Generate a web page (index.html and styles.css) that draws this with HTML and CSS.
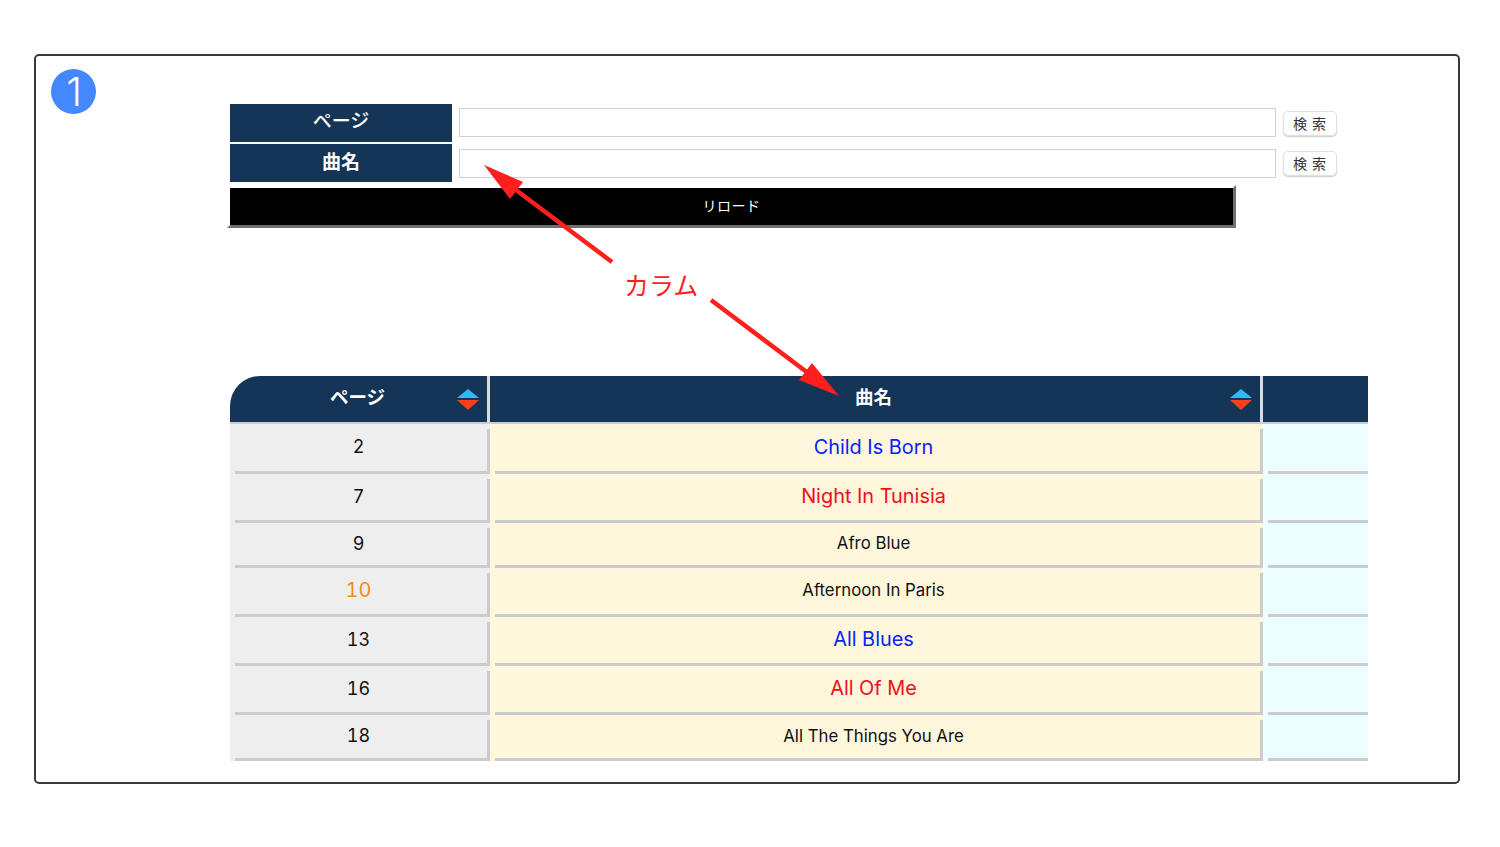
FILE: index.html

```html
<!DOCTYPE html>
<html lang="ja">
<head>
  <meta charset="UTF-8" />
  <meta name="viewport" content="width=device-width, initial-scale=1.0"/>
  <title>カラム</title>
  <link rel="stylesheet" href="styles.css">
</head>
<body>
  <div class="frame">
    <div class="badge">1</div>

    <div class="search">
      <div class="search-row">
        <div class="search-label">ページ</div>
        <input class="search-input" type="text" />
        <button class="search-btn">検 索</button>
      </div>
      <div class="search-row">
        <div class="search-label">曲名</div>
        <input class="search-input" type="text" />
        <button class="search-btn">検 索</button>
      </div>
      <button class="reload">リロード</button>
    </div>

    <table class="songs">
      <colgroup>
        <col class="col-page" />
        <col class="col-title" />
        <col class="col-extra" />
      </colgroup>
      <thead>
        <tr>
          <th class="first">ページ
            <svg class="sort" viewBox="0 0 22 21"><path d="M11 0 22 9H0z" fill="#2cbdf0"/><path d="M0 11h22L11 21z" fill="#f5411c"/></svg>
          </th>
          <th class="title-head">曲名
            <svg class="sort" viewBox="0 0 22 21"><path d="M11 0 22 9H0z" fill="#2cbdf0"/><path d="M0 11h22L11 21z" fill="#f5411c"/></svg>
          </th>
          <th class="last"></th>
        </tr>
      </thead>
      <tbody>
        <tr class="row-first">
          <td class="page">2</td>
          <td class="title blue">Child Is Born</td>
          <td class="extra"></td>
        </tr>
        <tr>
          <td class="page">7</td>
          <td class="title red">Night In Tunisia</td>
          <td class="extra"></td>
        </tr>
        <tr class="row-short">
          <td class="page">9</td>
          <td class="title">Afro Blue</td>
          <td class="extra"></td>
        </tr>
        <tr>
          <td class="page orange">10</td>
          <td class="title">Afternoon In Paris</td>
          <td class="extra"></td>
        </tr>
        <tr>
          <td class="page">13</td>
          <td class="title blue">All Blues</td>
          <td class="extra"></td>
        </tr>
        <tr>
          <td class="page">16</td>
          <td class="title red">All Of Me</td>
          <td class="extra"></td>
        </tr>
        <tr class="row-last">
          <td class="page">18</td>
          <td class="title">All The Things You Are</td>
          <td class="extra"></td>
        </tr>
      </tbody>
    </table>

    <!-- annotation, same coordinates as the screenshot -->
    <svg class="arrows" viewBox="34 54 1426 730">
      <path d="M612 262 516 190" stroke="#ff1f1f" stroke-width="4.5" fill="none"/>
      <path d="M484 165 523 182 510 199z" fill="#ff1f1f"/>
      <path d="M711 300 812 376" stroke="#ff1f1f" stroke-width="4.5" fill="none"/>
      <path d="M839 396 799 380 812 363z" fill="#ff1f1f"/>
    </svg>
    <div class="note">カラム</div>
  </div>
</body>
</html>
```

FILE: styles.css

```css
html, body {
  margin: 0;
  padding: 0;
  background-color: #fff;
  font-family: "Noto Sans CJK JP", "Noto Sans", sans-serif;
}

.frame {
  position: relative;
  box-sizing: border-box;
  width: 1426px;
  height: 730px;
  margin: 54px 0 0 34px;
  padding: 48px 0 0 194px;
  border: 2px solid #3a3a3a;
  border-radius: 5px;
}

.badge {
  position: absolute;
  left: 15px;
  top: 13px;
  width: 45px;
  height: 45px;
  padding-left: 1px;
  box-sizing: border-box;
  border-radius: 50%;
  background: #4488ff;
  color: #fff;
  font-family: Inter, sans-serif;
  font-weight: 300;
  font-size: 40px;
  line-height: 45px;
  text-align: center;
}

.search {
  display: flex;
  flex-direction: column;
  align-items: flex-start;
  gap: 2.5px;
}

.search-row {
  display: flex;
  align-items: center;
  gap: 7px;
  height: 37.5px;
}

.search-row + .search-row .search-input {
  margin-top: 1px;
}

.search-label {
  width: 222px;
  height: 100%;
  background: #153557;
  color: #fff;
  font-size: 19px;
  font-weight: 500;
  line-height: 32px;
  text-align: center;
}

.search-row + .search-row .search-label {
  font-weight: 700;
  line-height: 34px;
}

.search-input {
  box-sizing: border-box;
  width: 817px;
  height: 29px;
  padding: 0;
  border: 1px solid #d2d2d2;
  background: #fff;
}

.search-btn {
  box-sizing: border-box;
  width: 54px;
  height: 25px;
  margin-top: 2px;
  padding: 0 0 2px;
  border: 1px solid #e0e0e0;
  border-radius: 5px;
  background: #fff;
  box-shadow: 0 1px 1px #ccc;
  color: #333;
  font-family: inherit;
  font-size: 14px;
  letter-spacing: 1px;
}

.reload {
  box-sizing: border-box;
  width: 1009px;
  height: 43px;
  margin: 1px 0 0 -3px;
  padding: 0 0 4px;
  border: 3px solid;
  border-color: #fff #707070 #707070 #fff;
  background: #000;
  color: #fff;
  font-family: inherit;
  font-size: 14px;
  letter-spacing: .5px;
}

.songs {
  table-layout: fixed;
  width: 1138px;
  margin-top: 148px;
  border-collapse: separate;
  border-spacing: 0;
}

.col-page { width: 260px; }
.col-title { width: 773px; }
.col-extra { width: 105px; }

.songs th {
  position: relative;
  box-sizing: border-box;
  height: 48px;
  padding: 0 0 7px;
  background: #153557;
  background-clip: padding-box;
  color: #fff;
  font-size: 18.5px;
  font-weight: 700;
  text-align: center;
  border-bottom: 2px solid #ccc;
}

.songs th.first {
  padding-right: 2px;
  border-top-left-radius: 30px;
  border-right: 3px solid #d8dde2;
}

.songs th.title-head {
  padding-right: 3px;
  border-right: 3px solid #d8dde2;
}

.sort {
  position: absolute;
  top: 13px;
  right: 8px;
  width: 22px;
  height: 21px;
}

.songs td {
  position: relative;
  box-sizing: border-box;
  height: 49px;
  padding: 0 0 5px;
  font-family: Inter, "Noto Sans CJK JP", sans-serif;
  text-align: center;
  color: #111;
  font-size: 16.8px;
}

/* lines between the cells stop short of the corner */
.songs td::after {
  content: "";
  position: absolute;
  left: 5px;
  right: 0;
  bottom: 0;
  height: 3px;
  background: #cccccc;
}

.songs td.page::before,
.songs td.title::before {
  content: "";
  position: absolute;
  top: 5px;
  right: 0;
  bottom: 0;
  width: 3px;
  background: #cccccc;
}

.songs .row-first td { height: 50px; }
.songs .row-short td { height: 45px; }
.songs .row-last td { height: 46px; }

.songs td.page {
  padding-right: 3px;
  background: #eeeeee;
  font-size: 18px;
  font-variant-numeric: tabular-nums;
}

.songs td.title { padding-right: 6px; background: #fff7dc; }
.songs td.extra { background: #ecfeff; }
.songs td.blue { color: #0a22f5; font-size: 19.9px; }
.songs td.red { color: #f20d1e; font-size: 19.9px; }
.songs td.orange { color: #f58a1f; font-size: 19.9px; }

.arrows {
  position: absolute;
  left: -2px;
  top: -2px;
  width: 1426px;
  height: 730px;
  pointer-events: none;
}

.note {
  position: absolute;
  left: 588px;
  top: 210px;
  color: #ff1f1f;
  font-size: 25px;
  line-height: 36px;
}
```
